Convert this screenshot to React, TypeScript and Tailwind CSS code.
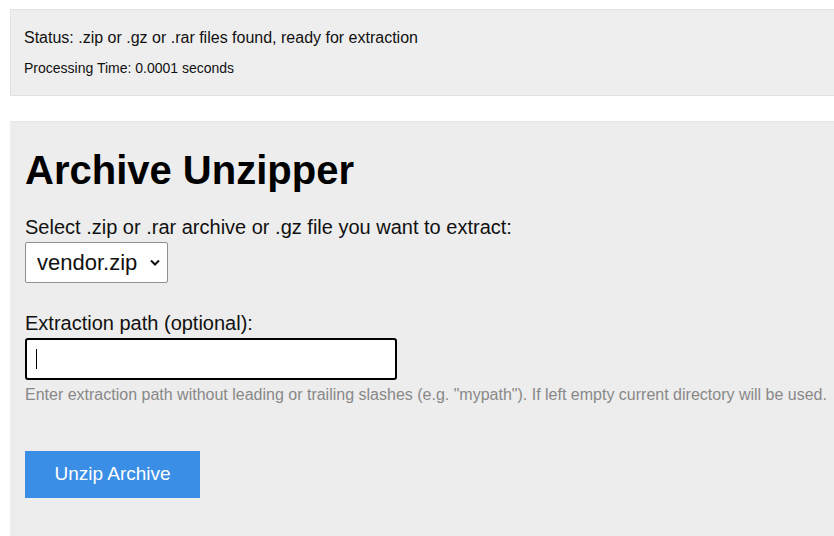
export default function App() {
  return (
    <div className="min-h-screen bg-white pt-[9px] pl-[10px] font-['Liberation_Sans',Arial,sans-serif] overflow-hidden">
      {/* status */}
      <div className="h-[87px] bg-[#eeeeee] border border-r-0 border-[#e2e2e2] pl-[13px] pt-[18px]">
        <p className="text-[16px] leading-[20px] text-[#111]">Status: .zip or .gz or .rar files found, ready for extraction</p>
        <p className="mt-[11px] text-[14px] leading-[18px] text-[#111]">Processing Time: 0.0001 seconds</p>
      </div>

      {/* form */}
      <div className="mt-[25px] h-[430px] bg-[#ededed] border-t border-[#e6e6e6] pl-[15px] pt-[24px]">
        <h1 className="text-[40px] leading-[48px] font-bold text-black">Archive Unzipper</h1>
        <label className="block mt-[21px] text-[20px] leading-[24px] text-[#111]">
          Select .zip or .rar archive or .gz file you want to extract:
        </label>
        <div className="relative mt-[3px] w-[143px] h-[41px]">
          <select
            defaultValue="vendor.zip"
            className="appearance-none w-full h-full bg-white border border-[#8f8f8f] rounded-[2px] pl-[11px] text-[22px] text-[#111] outline-none"
          >
            <option>vendor.zip</option>
          </select>
          <svg className="pointer-events-none absolute right-[7px] top-[16px]" width="12" height="9" viewBox="0 0 12 9">
            <path d="M2 2.5l4 4 4-4" fill="none" stroke="#111" strokeWidth="2" />
          </svg>
        </div>

        <label className="block mt-[28px] text-[20px] leading-[24px] text-[#111]">Extraction path (optional):</label>
        <div className="mt-[3px] w-[372px] h-[42px] bg-white border-2 border-black rounded-[3px] flex items-center pl-[9px]">
          <span className="w-px h-[20px] bg-black" />
        </div>
        <p className="mt-[5px] text-[16px] leading-[20px] text-[#888888] whitespace-nowrap">
          Enter extraction path without leading or trailing slashes (e.g. "mypath"). If left empty current directory will be used.
        </p>

        <button className="mt-[46px] w-[175px] h-[47px] bg-[#3a8ee6] text-white text-[19px]">Unzip Archive</button>
      </div>
    </div>
  )
}
